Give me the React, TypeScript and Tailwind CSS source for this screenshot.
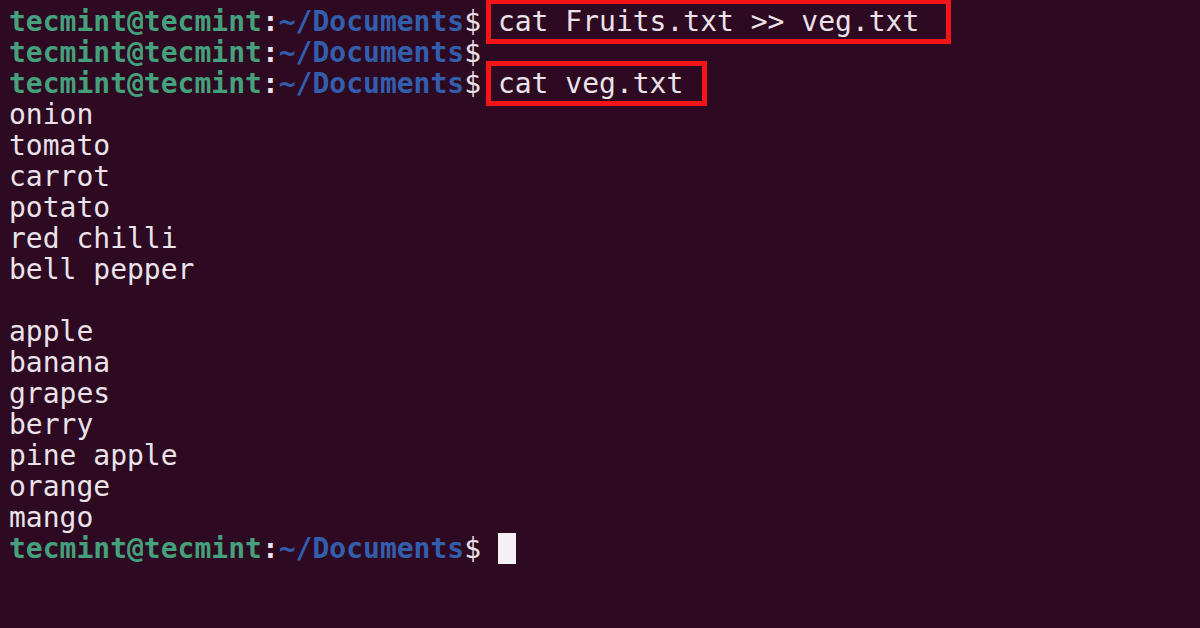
const prompt = (
  <>
    <span className="font-bold text-[#45a07c]">tecmint@tecmint</span>
    <span className="font-bold text-[#e9e0e8]">:</span>
    <span className="font-bold text-[#335ead]">~/Documents</span>
    <span className="text-[#e9e0e8]">$ </span>
  </>
);

const output = [
  "onion",
  "tomato",
  "carrot",
  "potato",
  "red chilli",
  "bell pepper",
  "",
  "apple",
  "banana",
  "grapes",
  "berry",
  "pine apple",
  "orange",
  "mango",
];

function Highlight({ text, right }: { text: string; right: string }) {
  return (
    <span className="relative">
      {text}
      <span
        className={`pointer-events-none absolute -left-[12px] -top-[6px] -bottom-[6px] border-[5px] border-[#f51418] ${right}`}
      />
    </span>
  );
}

export default function App() {
  return (
    <div
      className="w-[1200px] h-[628px] overflow-hidden bg-[#2d0a22] pl-[9px] pt-[6px] text-[28px] leading-[31px] text-[#ebe2ea] whitespace-pre"
      style={{ fontFamily: '"DejaVu Sans Mono", "Liberation Mono", monospace' }}
    >
      <div>
        {prompt}
        <Highlight text="cat Fruits.txt >> veg.txt" right="-right-[32px]" />
      </div>
      <div>{prompt}</div>
      <div>
        {prompt}
        <Highlight text="cat veg.txt" right="-right-[24px]" />
      </div>
      {output.map((line, i) => (
        <div key={i} className="h-[31px]">
          {line}
        </div>
      ))}
      <div className="flex items-center">
        {prompt}
        <span className="inline-block w-[18px] h-[31px] bg-[#f4f0f4]" />
      </div>
    </div>
  );
}
